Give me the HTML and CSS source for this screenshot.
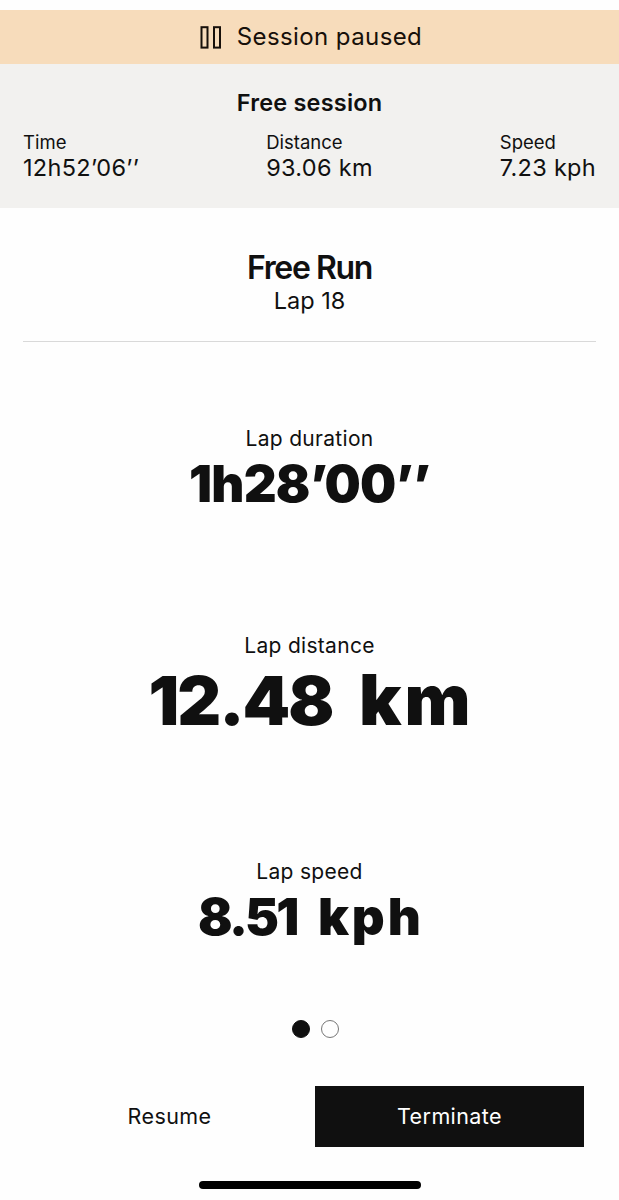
FILE: index.html
```html
<!DOCTYPE html>
<html lang="en">
<head>
    <meta charset="UTF-8">
    <meta name="viewport" content="width=device-width, initial-scale=1.0">
    <title>Free Run</title>
    <link rel="stylesheet" href="styles.css">
</head>
<body>
    <div class="banner">
        <svg class="pause-icon" width="22" height="23" viewBox="0 0 22 23" fill="none" stroke="#17100a" stroke-width="2">
            <rect x="1.5" y="1.2" width="6" height="20.4"/>
            <rect x="14" y="1.2" width="6" height="20.4"/>
        </svg>
        <span class="banner-text">Session paused</span>
    </div>
    <div class="summary">
        <h2>Free session</h2>
        <div class="stats">
            <div class="stat">
                <div class="stat-label">Time</div>
                <div class="stat-value">12h52’06’’</div>
            </div>
            <div class="stat">
                <div class="stat-label">Distance</div>
                <div class="stat-value">93.06 km</div>
            </div>
            <div class="stat">
                <div class="stat-label">Speed</div>
                <div class="stat-value">7.23 kph</div>
            </div>
        </div>
    </div>
    <div class="heading">
        <h1>Free Run</h1>
        <p>Lap 18</p>
    </div>
    <div class="metrics">
        <div class="metric duration">
            <div class="metric-label">Lap duration</div>
            <div class="metric-value">1h28’00’’</div>
        </div>
        <div class="metric distance">
            <div class="metric-label">Lap distance</div>
            <div class="metric-value">12.48 <span class="unit">km</span></div>
        </div>
        <div class="metric speed">
            <div class="metric-label">Lap speed</div>
            <div class="metric-value">8.51 <span class="unit">kph</span></div>
        </div>
    </div>
    <div class="dots">
        <span class="dot active"></span>
        <span class="dot"></span>
    </div>
    <div class="buttons">
        <button class="resume">Resume</button>
        <button class="terminate">Terminate</button>
    </div>
    <div class="home-bar"></div>
</body>
</html>
```
FILE: styles.css
```css
* {
    box-sizing: border-box;
}
body {
    font-family: Inter, 'Liberation Sans', sans-serif;
    background-color: #fefefe;
    color: #101010;
    margin: 0;
    padding-top: 10px;
    height: 1200px;
    overflow: hidden;
}
h1, h2, p {
    margin: 0;
}
.banner {
    display: flex;
    align-items: center;
    justify-content: center;
    gap: 15px;
    height: 54px;
    padding: 0 0 2px 3px;
    background-color: #f7dcbb;
    color: #17100a;
}
.pause-icon {
    margin-top: 3px;
}
.banner-text {
    font-size: 24px;
    letter-spacing: 0.4px;
}
.summary {
    height: 144px;
    padding: 24px 23px 0;
    background-color: #f2f1ef;
}
.summary h2 {
    font-size: 23.5px;
    font-weight: 600;
    line-height: 29px;
    letter-spacing: 0.2px;
    text-align: center;
}
.stats {
    display: flex;
    justify-content: space-between;
    margin-top: 14px;
}
.stat-label {
    font-size: 18.5px;
    line-height: 23px;
}
.stat-value {
    font-size: 23.5px;
    line-height: 27px;
    letter-spacing: 0.3px;
}
.heading {
    margin: 0 23px;
    padding: 42px 0 25px;
    border-bottom: 1px solid #d9d9d9;
    text-align: center;
}
.heading h1 {
    font-size: 32px;
    font-weight: 600;
    line-height: 35px;
    letter-spacing: -1.4px;
}
.heading p {
    font-size: 23.5px;
    line-height: 31px;
}
.metrics {
    padding-top: 83px;
    text-align: center;
}
.metric {
    margin-bottom: 116px;
}
.metric-label {
    font-size: 21px;
    line-height: 27px;
    letter-spacing: 0.3px;
}
.metric-value {
    font-size: 51px;
    font-weight: 900;
    line-height: 64px;
    letter-spacing: -0.8px;
}
.distance .metric-value {
    font-size: 68px;
    line-height: 83px;
    letter-spacing: -2px;
    word-spacing: 15px;
}
.speed .metric-value {
    letter-spacing: -2.8px;
    word-spacing: 14px;
}
.metric-value .unit {
    letter-spacing: 3px;
    margin-right: -3px;
}
.distance .unit {
    font-size: 70px;
    line-height: 1;
}
.speed {
    margin-bottom: 71px;
}
.dots {
    display: flex;
    justify-content: center;
    gap: 11px;
    padding-left: 11px;
}
.dot {
    width: 18px;
    height: 18px;
    border: 1px solid #777;
    border-radius: 50%;
}
.dot.active {
    background-color: #101010;
    border-color: #101010;
}
.buttons {
    display: flex;
    gap: 11px;
    margin: 48px 35px 0;
}
.buttons button {
    flex: 1;
    height: 61px;
    padding: 0 0 2px;
    border: none;
    background: none;
    color: #101010;
    font-family: inherit;
    font-size: 21.5px;
    letter-spacing: 0.4px;
}
.buttons .terminate {
    background-color: #101010;
    color: #fff;
}
.home-bar {
    width: 222px;
    height: 8px;
    margin: 34px auto 0;
    border-radius: 4px;
    background-color: #000;
}
```
